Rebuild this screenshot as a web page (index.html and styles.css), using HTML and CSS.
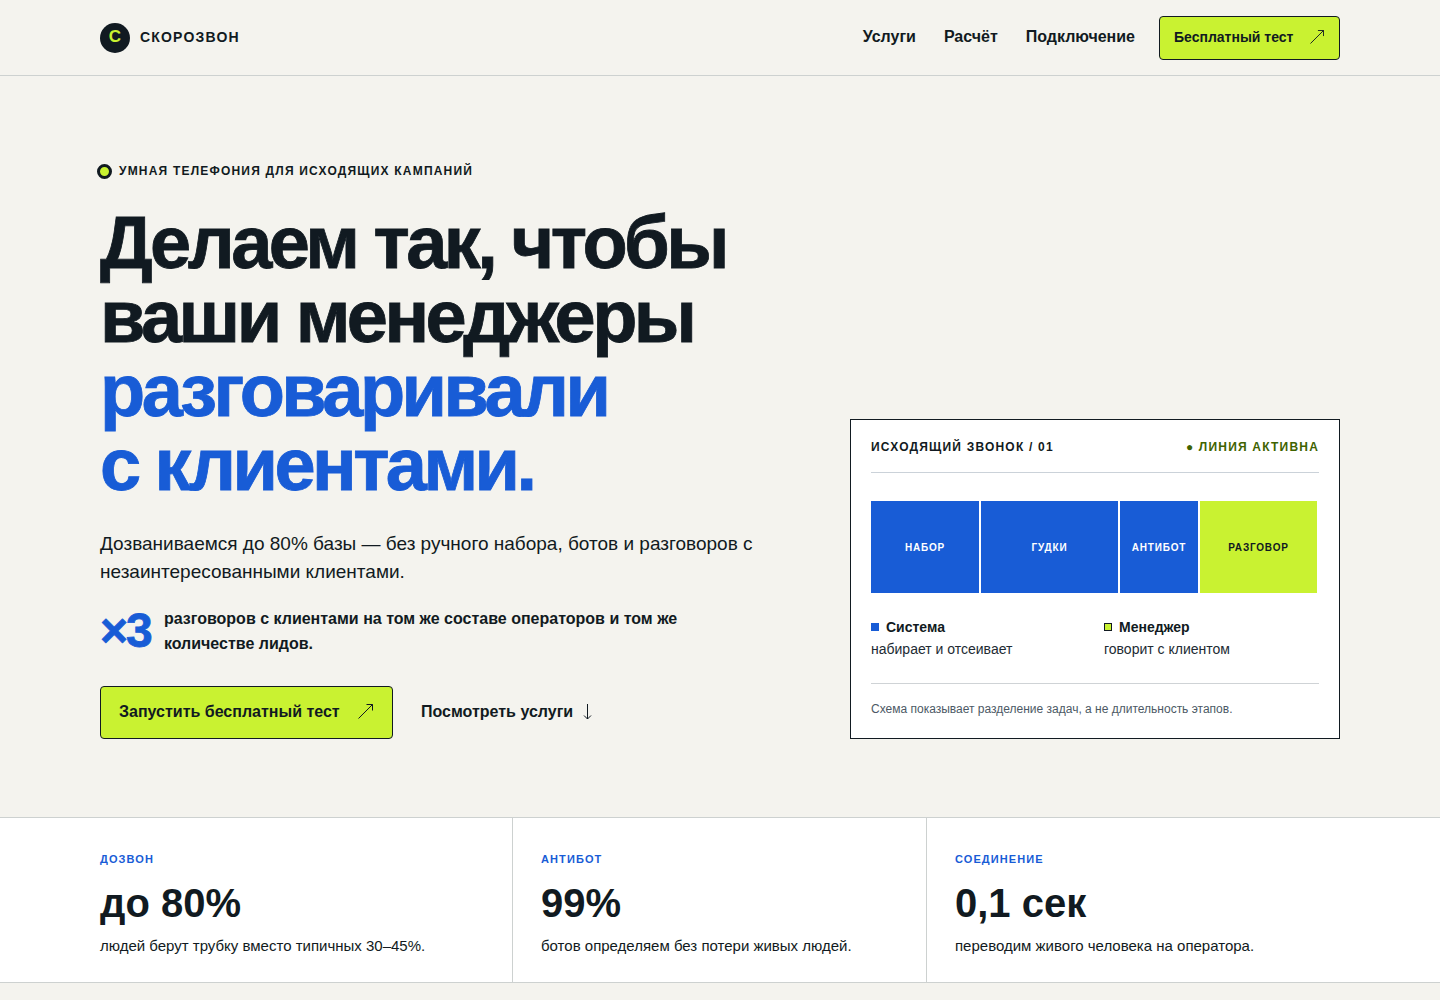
FILE: index.html
```html
<!DOCTYPE html>
<html lang="ru">

<head>
    <meta charset="UTF-8">
    <meta name="viewport" content="width=device-width, initial-scale=1.0">
    <title>Скорозвон</title>
    <link rel="stylesheet" href="styles.css">
</head>

<body>
<header class="header">
    <div class="container header-row">
        <a class="logo" href="#">
            <span class="logo-mark">C</span>
            <span class="logo-text">СКОРОЗВОН</span>
        </a>
        <nav class="nav">
            <a href="#">Услуги</a>
            <a href="#">Расчёт</a>
            <a href="#">Подключение</a>
            <a class="btn btn-small" href="#">Бесплатный тест
                <svg class="arrow" width="14" height="14" viewBox="0 0 15 15"><path d="M.5 14.5 14.5.5M8.5.5h6v6"/></svg>
            </a>
        </nav>
    </div>
</header>

<section class="hero">
    <div class="container hero-row">
        <div class="hero-main">
            <div class="eyebrow"><span class="eyebrow-dot"></span>УМНАЯ ТЕЛЕФОНИЯ ДЛЯ ИСХОДЯЩИХ КАМПАНИЙ</div>
            <h1>Делаем так, чтобы<br>ваши менеджеры<br><span class="blue">разговаривали<br>с клиентами.</span></h1>
            <p class="lead">Дозваниваемся до 80% базы — без ручного набора, ботов и разговоров с незаинтересованными клиентами.</p>
            <div class="times">
                <span class="times-num">×3</span>
                <p>разговоров с клиентами на том же составе операторов и том же количестве лидов.</p>
            </div>
            <div class="actions">
                <a class="btn btn-large" href="#">Запустить бесплатный тест
                    <svg class="arrow" width="15" height="15" viewBox="0 0 15 15"><path d="M.5 14.5 14.5.5M8.5.5h6v6"/></svg>
                </a>
                <a class="link-down" href="#">Посмотреть услуги
                    <svg class="arrow" width="9" height="16" viewBox="0 0 9 16"><path d="M4.5 0v15M1 11.5l3.5 3.5L8 11.5"/></svg>
                </a>
            </div>
        </div>

        <div class="card">
            <div class="card-top">
                <span>ИСХОДЯЩИЙ ЗВОНОК / 01</span>
                <span class="status">● ЛИНИЯ АКТИВНА</span>
            </div>
            <div class="stages">
                <div class="stage stage-1">НАБОР</div>
                <div class="stage stage-2">ГУДКИ</div>
                <div class="stage stage-3">АНТИБОТ</div>
                <div class="stage stage-4">РАЗГОВОР</div>
            </div>
            <div class="legend">
                <div>
                    <div class="legend-title"><span class="mark mark-blue"></span>Система</div>
                    <div class="legend-text">набирает и отсеивает</div>
                </div>
                <div>
                    <div class="legend-title"><span class="mark mark-lime"></span>Менеджер</div>
                    <div class="legend-text">говорит с клиентом</div>
                </div>
            </div>
            <div class="card-note">Схема показывает разделение задач, а не длительность этапов.</div>
        </div>
    </div>
</section>

<section class="stats">
    <div class="container stats-row">
        <div class="stat stat-first">
            <div class="stat-label">ДОЗВОН</div>
            <div class="stat-value">до 80%</div>
            <div class="stat-text">людей берут трубку вместо типичных 30–45%.</div>
        </div>
        <div class="stat">
            <div class="stat-label">АНТИБОТ</div>
            <div class="stat-value">99%</div>
            <div class="stat-text">ботов определяем без потери живых людей.</div>
        </div>
        <div class="stat">
            <div class="stat-label">СОЕДИНЕНИЕ</div>
            <div class="stat-value">0,1 сек</div>
            <div class="stat-text">переводим живого человека на оператора.</div>
        </div>
    </div>
</section>
</body>

</html>
```

FILE: styles.css
```css
* {
    box-sizing: border-box;
}

body {
    margin: 0;
    background-color: #f4f3ee;
    color: #111a21;
    font-family: "Liberation Sans", Arial, sans-serif;
}

a {
    color: inherit;
    text-decoration: none;
}

.container {
    width: 1240px;
    margin: 0 auto;
}

.blue {
    color: #185cd6;
}

/* header */
.header {
    height: 76px;
    border-bottom: 1px solid #cdd1d0;
}

.header-row {
    height: 75px;
    display: flex;
    align-items: center;
    justify-content: space-between;
}

.logo {
    display: flex;
    align-items: center;
    gap: 10px;
}

.logo-mark {
    width: 30px;
    height: 30px;
    border-radius: 50%;
    background-color: #111a21;
    color: #c9f231;
    font-size: 17px;
    font-weight: 700;
    line-height: 28px;
    text-align: center;
}

.logo-text {
    font-size: 14px;
    font-weight: 700;
    letter-spacing: 0.085em;
    margin-top: -2px;
}

.nav {
    display: flex;
    align-items: center;
    gap: 28px;
    font-size: 16px;
    font-weight: 700;
}

.nav a:not(.btn) {
    margin-top: -1px;
}

.btn {
    display: flex;
    align-items: center;
    justify-content: space-between;
    background-color: #c9f231;
    border: 1px solid #111a21;
    border-radius: 4px;
    font-weight: 700;
}

.btn-small {
    width: 181px;
    height: 44px;
    margin-left: -4px;
    padding: 0 15px 2px 14px;
    font-size: 14px;
}

.btn-large {
    width: 293px;
    height: 53px;
    padding: 0 19px 2px 18px;
    font-size: 16px;
}

.arrow {
    fill: none;
    stroke: #111a21;
    stroke-width: 1;
}

/* hero */
.hero {
    height: 741px;
    padding-top: 86px;
}

.hero-row {
    display: flex;
    justify-content: space-between;
    align-items: flex-end;
}

.hero-main {
    width: 680px;
}

.eyebrow {
    display: flex;
    align-items: center;
    gap: 7px;
    margin-left: -3px;
    height: 18px;
    font-size: 12px;
    font-weight: 700;
    letter-spacing: 0.1em;
}

.eyebrow-dot {
    width: 15px;
    height: 15px;
    border: 3px solid #111a21;
    border-radius: 50%;
    background-color: #c9f231;
}

h1 {
    margin: 26px 0 0;
    font-size: 74px;
    font-weight: 700;
    line-height: 74px;
    letter-spacing: -0.048em;
    -webkit-text-stroke: 0.8px currentColor;
}

.lead {
    margin: 28px 0 0;
    width: 670px;
    font-size: 19px;
    line-height: 28px;
}

.times {
    display: flex;
    align-items: center;
    gap: 13px;
    margin-top: 20px;
}

.times-num {
    color: #185cd6;
    font-size: 48px;
    font-weight: 700;
    letter-spacing: -0.04em;
    line-height: 50px;
    -webkit-text-stroke: 0.8px currentColor;
}

.times p {
    margin: 0;
    width: 530px;
    font-size: 16px;
    font-weight: 700;
    line-height: 25px;
}

.actions {
    display: flex;
    align-items: center;
    gap: 28px;
    margin-top: 30px;
}

.link-down {
    display: flex;
    align-items: center;
    gap: 10px;
    padding-bottom: 2px;
    font-size: 16px;
    font-weight: 700;
}

/* card */
.card {
    width: 490px;
    height: 320px;
    padding: 20px;
    background-color: #fff;
    border: 1px solid #111a21;
}

.card-top {
    display: flex;
    justify-content: space-between;
    height: 33px;
    border-bottom: 1px solid #cbd2d9;
    font-size: 12px;
    font-weight: 700;
    letter-spacing: 0.1em;
    line-height: 14px;
}

.status {
    color: #3f6300;
}

.stages {
    display: flex;
    gap: 2px;
    height: 92px;
    margin-top: 28px;
    width: 446px;
    color: #fff;
    font-size: 10px;
    font-weight: 700;
    letter-spacing: 0.08em;
}

.stage {
    display: flex;
    align-items: center;
    justify-content: center;
    background-color: #185cd6;
}

.stage-1 {
    width: 108px;
}

.stage-2 {
    width: 137px;
}

.stage-3 {
    width: 78px;
}

.stage-4 {
    width: 117px;
    background-color: #c9f231;
    color: #111a21;
}

.legend {
    display: grid;
    grid-template-columns: 233px 1fr;
    margin-top: 24px;
    height: 66px;
    font-size: 14px;
}

.legend-title {
    display: flex;
    align-items: center;
    gap: 7px;
    font-weight: 700;
    line-height: 20px;
}

.legend-text {
    margin-top: 2px;
    line-height: 20px;
    color: #222b33;
}

.mark {
    width: 8px;
    height: 8px;
    background-color: #185cd6;
}

.mark-lime {
    background-color: #c9f231;
    border: 1px solid #111a21;
}

.card-note {
    padding-top: 18px;
    border-top: 1px solid #cfd3d6;
    color: #4c5965;
    font-size: 12px;
    line-height: 14px;
}

/* stats */
.stats {
    height: 166px;
    background-color: #fff;
    border-top: 1px solid #cdd1d0;
    border-bottom: 1px solid #cdd1d0;
}

.stats-row {
    display: grid;
    grid-template-columns: 412px 414px 1fr;
    height: 100%;
}

.stat {
    padding: 34px 28px 0;
    border-left: 1px solid #cdd1d0;
}

.stat-first {
    padding-left: 0;
    border-left: none;
}

.stat-label {
    color: #185cd6;
    font-size: 11px;
    font-weight: 700;
    letter-spacing: 0.1em;
    line-height: 14px;
}

.stat-value {
    margin-top: 14px;
    font-size: 40px;
    font-weight: 700;
    line-height: 46px;
}

.stat-text {
    margin-top: 10px;
    font-size: 15px;
    line-height: 20px;
}
```
